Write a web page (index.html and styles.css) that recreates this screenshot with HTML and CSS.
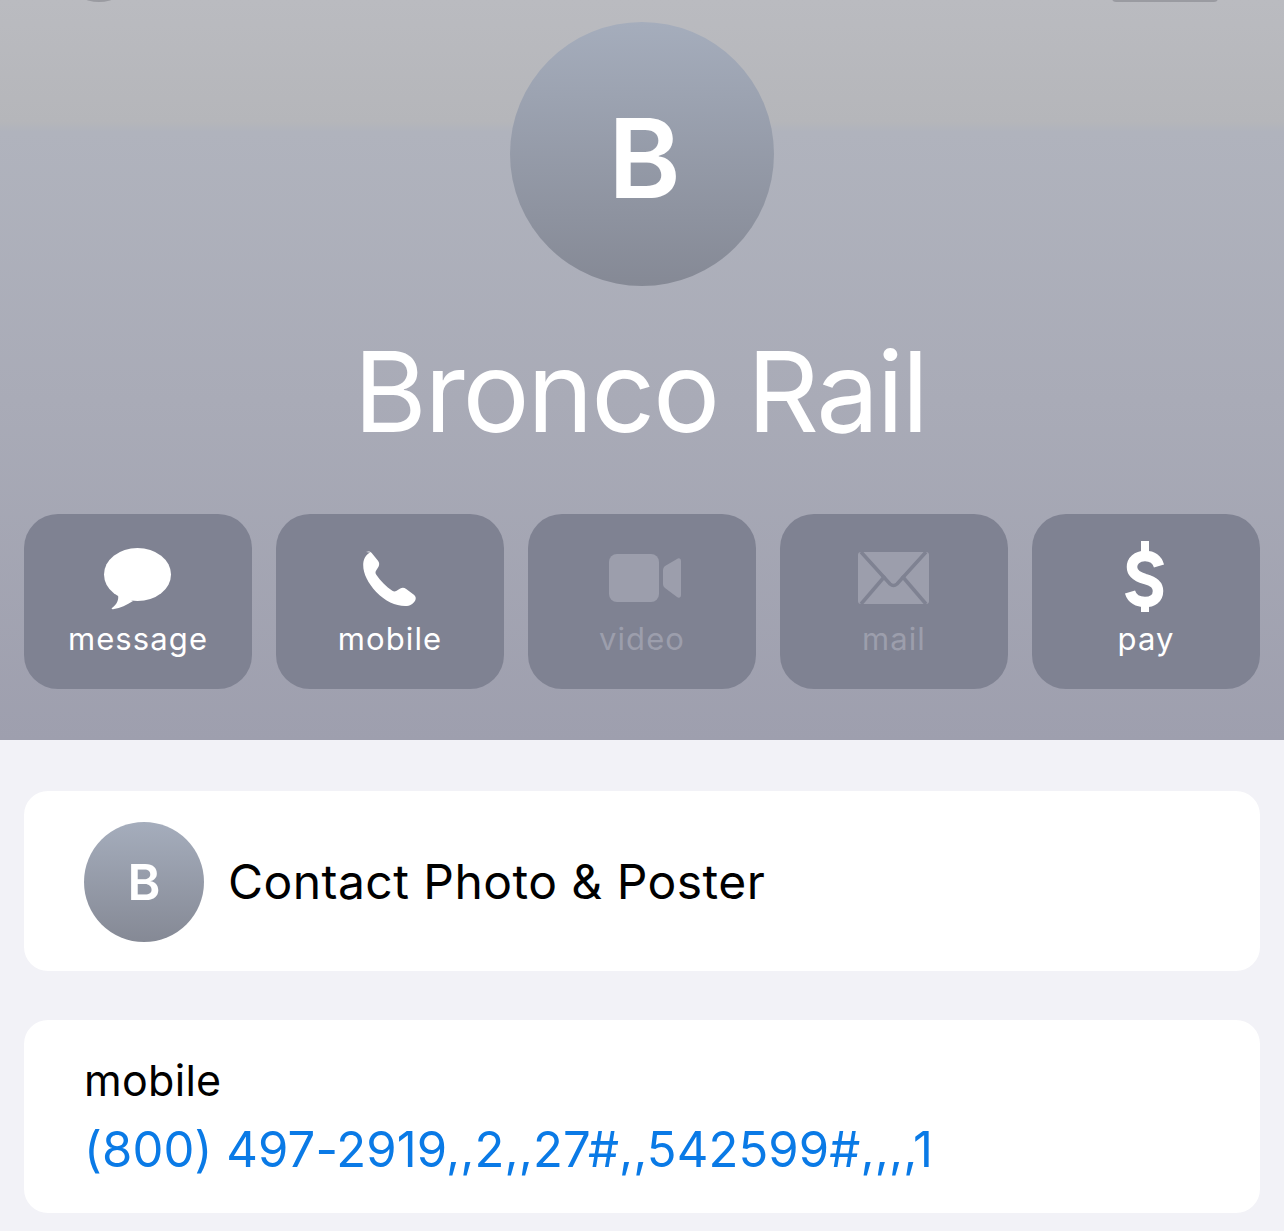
FILE: index.html
```html
<!DOCTYPE html>
<html lang="en">
<head>
<meta charset="utf-8">
<title>Bronco Rail</title>
<link rel="stylesheet" href="styles.css">
</head>
<body>
<header class="hero">
  <span class="nav-back"></span>
  <span class="nav-edit"></span>
  <div class="avatar">B</div>
  <h1 class="name">Bronco Rail</h1>
  <div class="actions">
    <div class="action">
      <svg class="icon" viewBox="0 -4 72 72" width="72" height="72"><g fill="#fff"><ellipse cx="35.500" cy="30.500" rx="33.500" ry="26.500"/><path d="M16 50C17 56 15 60 10 64C9 65 10 65.500 12 65C18 64 25 61 31 57Z"/></g></svg>
      <span class="label">message</span>
    </div>
    <div class="action">
      <svg class="icon" viewBox="0 -4 72 72" width="72" height="72"><path fill="#fff" transform="translate(-9 5)" d="M21 3c2-1 4-.8 5.500.8l6.500 8c1.500 2 1.500 4 .5 6l-2.500 4c-.8 1.400-.6 2.500.3 3.900 4 6 10 12 16 16 1.400.9 2.500 1 3.900.3l4-2.500c2-1 4-1 6 .5l8 6c1.600 1.500 2 3.500 1 5.500-2 3.500-5 5.500-10 5.500-10 0-20-5-29-14-8-9-13-18-13-27 0-5 2-10 7-12.500z"/></svg>
      <span class="label">mobile</span>
    </div>
    <div class="action muted">
      <svg class="icon" viewBox="0 -4 80 72" width="80" height="72"><g fill="#9c9eac"><rect x="7" y="10" width="50" height="48" rx="8"/><path d="M63 22L75 15C77 13.500 79 14.500 79 17V51C79 53.500 77 54.500 75 53L63 44C62 43 61 42 61 40V26C61 24.500 62 23 63 22Z"/></g></svg>
      <span class="label">video</span>
    </div>
    <div class="action muted">
      <svg class="icon" viewBox="0 -4 72 72" width="72" height="72"><rect x="0" y="8" width="71" height="52" rx="3" fill="#9c9eac"/><g fill="none" stroke="#7f8292" stroke-width="3.500"><path d="M3 8L32 40Q35.500 43 39 40L68 8"/><path d="M3 60L27 32"/><path d="M68 60L44 32"/></g></svg>
      <span class="label">mail</span>
    </div>
    <div class="action">
      <svg class="icon" viewBox="0 -4 72 72" width="72" height="72"><path fill="none" stroke="#fff" stroke-width="10.500" d="M49 22C47 15 42 12 35 12C27 12 22 17 22 23C22 30 28 33 35 35C43 37 48 40 48 47C48 55 42 58 35 58C28 58 22 55 20 48"/><rect x="31" y="-3" width="8" height="13" fill="#fff"/><rect x="31" y="57" width="8" height="11" fill="#fff"/></svg>
      <span class="label">pay</span>
    </div>
  </div>
</header>
<main class="content">
  <section class="card photo-card">
    <div class="mini-avatar">B</div>
    <span class="photo-title">Contact Photo &amp; Poster</span>
  </section>
  <section class="card phone-card">
    <div class="phone-type">mobile</div>
    <div class="phone-number">(800) 497-2919,,2,,27#,,542599#,,,,1</div>
  </section>
</main>
</body>
</html>
```
FILE: styles.css
```css
* { box-sizing: border-box; }
html, body { margin: 0; padding: 0; }
body {
  width: 1284px;
  height: 1231px;
  overflow: hidden;
  background: #f2f2f7;
  font-family: Inter, "Liberation Sans", sans-serif;
  color: #000;
}
.hero {
  position: relative;
  height: 740px;
  padding: 22px 24px 0;
  display: flex;
  flex-direction: column;
  align-items: center;
  background: linear-gradient(180deg, #babbc0 0, #b5b6ba 122px, #b0b3bd 132px, #a9abb7 400px, #9e9fae 740px);
}
.nav-back {
  position: absolute;
  left: 85px;
  top: -6px;
  width: 28px;
  height: 8px;
  border-radius: 50%;
  background: #9a9ba1;
}
.nav-edit {
  position: absolute;
  left: 1112px;
  top: -6px;
  width: 106px;
  height: 8px;
  border-radius: 4px;
  background: #9a9ba1;
}
.avatar {
  width: 264px;
  height: 264px;
  border-radius: 50%;
  flex: none;
  display: flex;
  align-items: center;
  justify-content: center;
  padding: 7px 0 0 5px;
  background: linear-gradient(180deg, #a5adbc 0%, #858995 100%);
  color: #fff;
  font-size: 110px;
  font-weight: 600;
}
.name {
  margin: 40px 4px 0 0;
  height: 128px;
  font-size: 112px;
  line-height: 130px;
  font-weight: 400;
  letter-spacing: -2.3px;
  color: #fff;
  white-space: nowrap;
}
.actions {
  margin-top: 60px;
  width: 100%;
  display: grid;
  grid-template-columns: repeat(5, 228px);
  gap: 24px;
}
.action {
  height: 175px;
  border-radius: 34px;
  background: #7f8292;
  display: flex;
  flex-direction: column;
  align-items: center;
  padding-top: 26px;
  color: #fff;
}
.icon { display: block; flex: none; }
.label {
  margin-top: 8px;
  font-size: 31px;
  line-height: 38px;
  letter-spacing: 1.1px;
}
.muted .label { color: #9c9eac; }
.content {
  padding: 51px 24px 0;
  display: flex;
  flex-direction: column;
  gap: 49px;
}
.card {
  background: #fff;
  border-radius: 24px;
}
.photo-card {
  height: 180px;
  padding-left: 60px;
  display: flex;
  align-items: center;
  gap: 24px;
}
.mini-avatar {
  width: 120px;
  height: 120px;
  margin-top: 2px;
  border-radius: 50%;
  flex: none;
  display: flex;
  align-items: center;
  justify-content: center;
  background: linear-gradient(180deg, #a5adbc 0%, #858995 100%);
  color: #fff;
  font-size: 50px;
  font-weight: 600;
}
.photo-title {
  font-size: 48px;
  letter-spacing: 0.45px;
}
.phone-card {
  height: 193px;
  padding: 33px 0 0 60px;
}
.phone-type {
  font-size: 43px;
  line-height: 54px;
  letter-spacing: 0.3px;
}
.phone-number {
  margin-top: 13px;
  font-size: 49px;
  line-height: 60px;
  letter-spacing: 0.1px;
  color: #0a7ae6;
}
```
